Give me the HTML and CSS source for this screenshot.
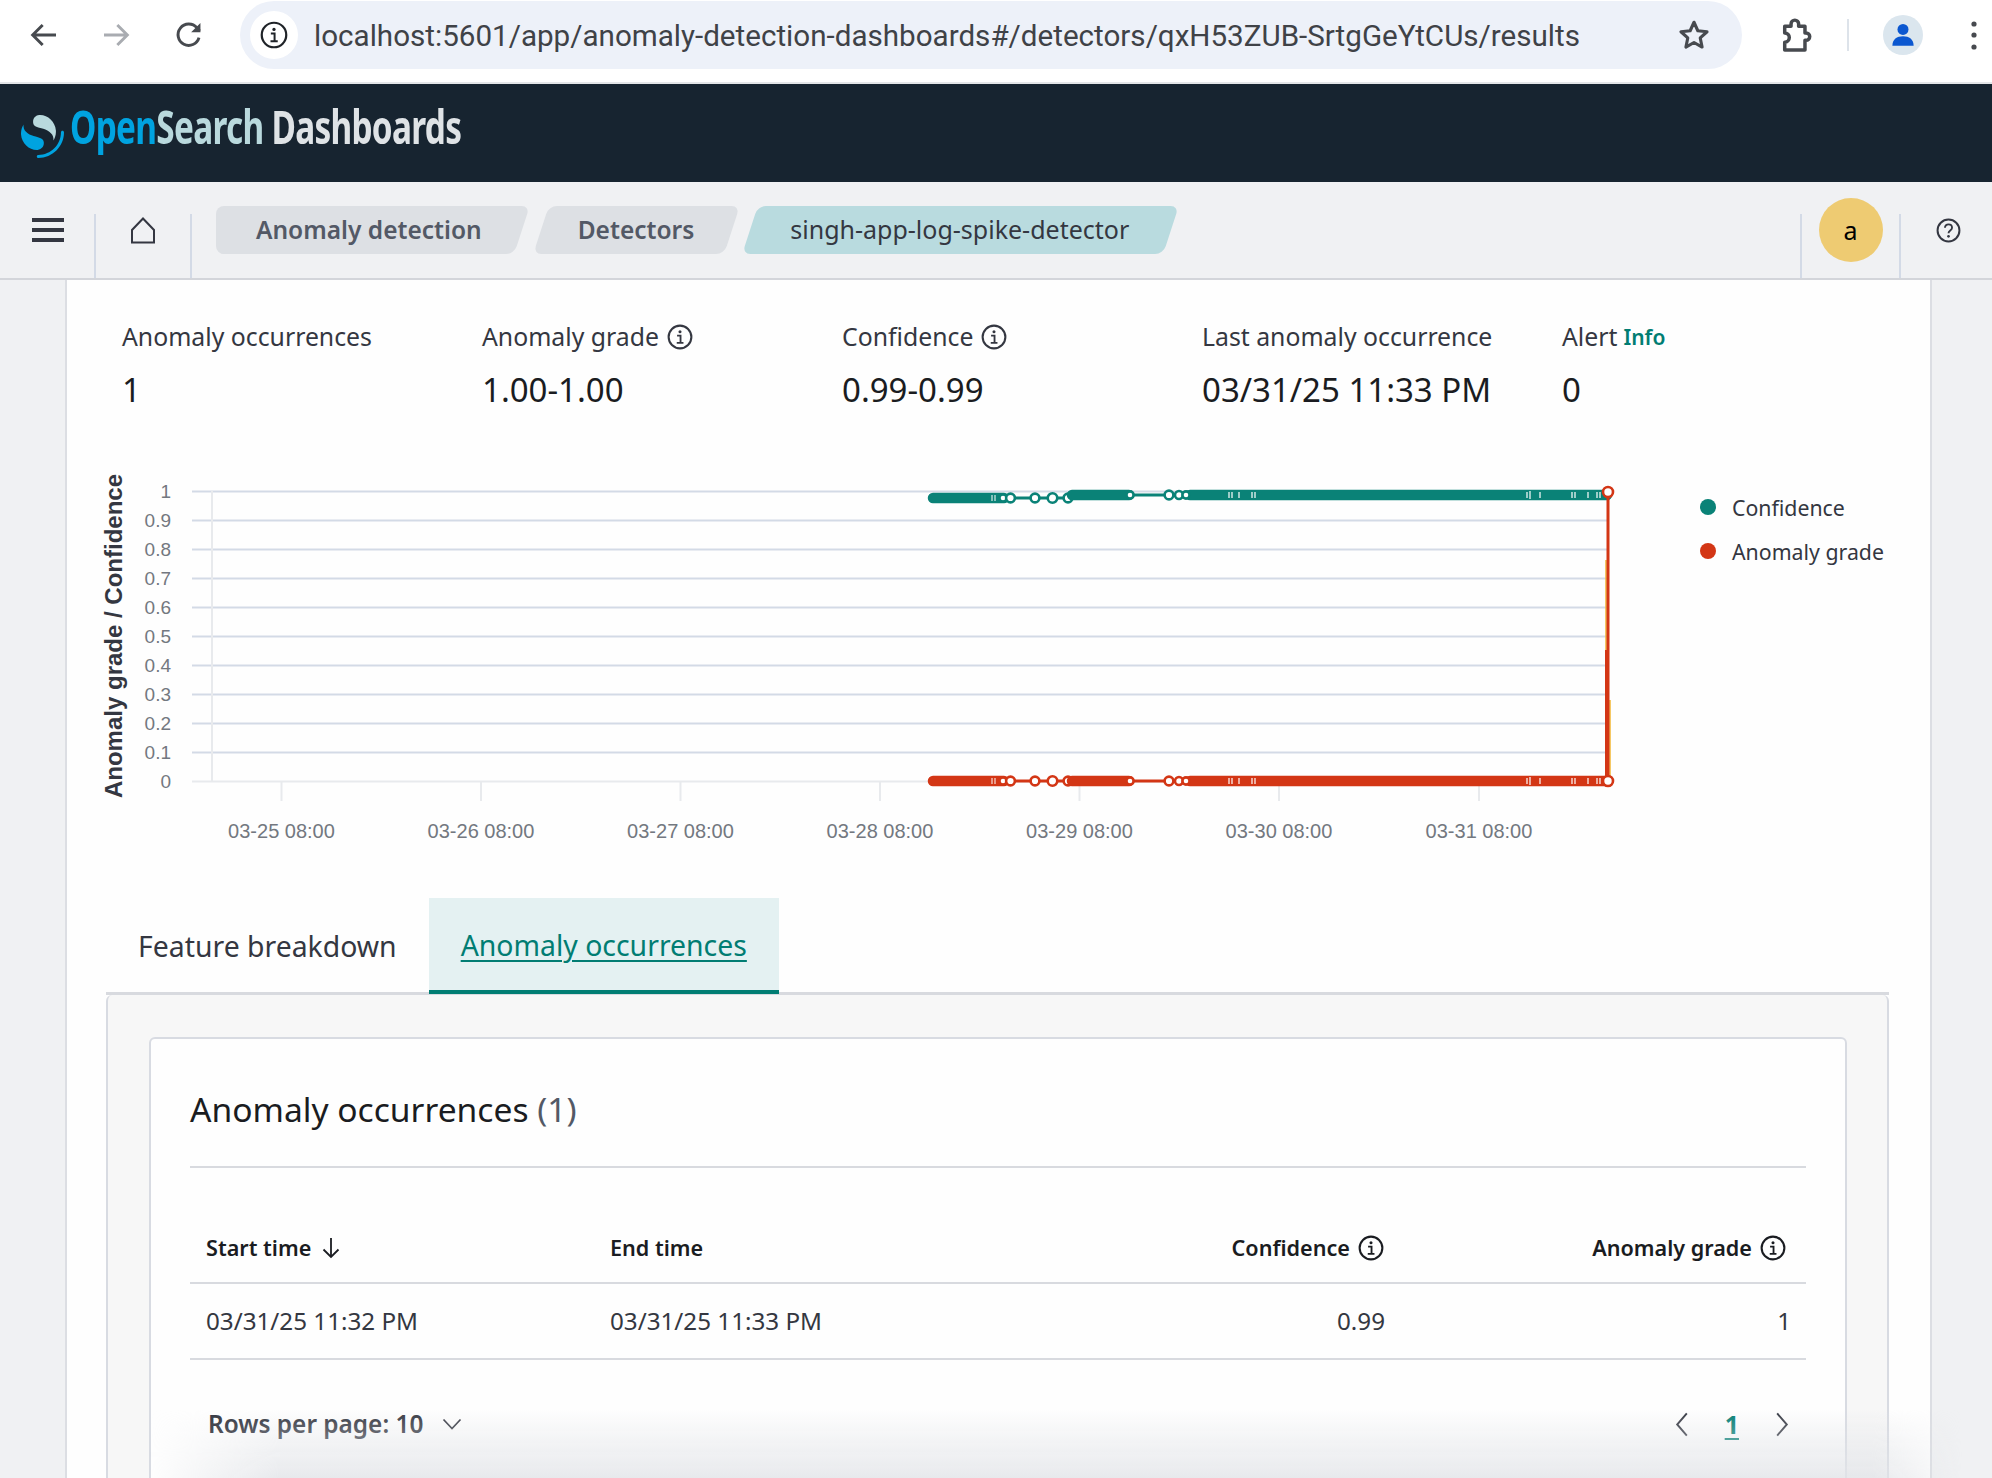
FILE: index.html
```html
<!DOCTYPE html>
<html lang="en">
<head>
    <meta charset="UTF-8">
    <title>Anomaly detection - OpenSearch Dashboards</title>
    <link rel="stylesheet" href="styles.css">
</head>
<body>

    <!-- Shared icons -->
    <svg class="defs" width="0" height="0">
        <symbol id="info" viewBox="0 0 24 24">
            <circle cx="12" cy="12" r="10.5" fill="none" stroke="currentColor" stroke-width="1.9"/>
            <circle cx="12" cy="7.2" r="1.4" fill="currentColor"/>
            <path d="M9.3 10.8h3.2v6.4M9 17.4h6.2" fill="none" stroke="currentColor" stroke-width="1.7"/>
        </symbol>
        <g id="run-left">
            <path d="M933 0H1068" fill="none" stroke="currentColor" stroke-width="3"/>
            <path d="M933 0H1004" fill="none" stroke="currentColor" stroke-width="10.5" stroke-linecap="round"/>
            <g fill="#fff" stroke="currentColor" stroke-width="2.6">
                <circle cx="1003" cy="0" r="3.6"/>
                <circle cx="1010.5" cy="0" r="4.4"/>
                <circle cx="1035" cy="0" r="4.4"/>
                <circle cx="1052.5" cy="0" r="4.8"/>
                <circle cx="1068" cy="0" r="4.4"/>
            </g>
            <path d="M992 -3V3M995 -3V3" stroke="#fff" stroke-width="1"/>
        </g>
        <g id="run-right">
            <path d="M1072 0H1608" fill="none" stroke="currentColor" stroke-width="3"/>
            <path d="M1072 0H1129M1190 0H1607" fill="none" stroke="currentColor" stroke-width="10.5" stroke-linecap="round"/>
            <g fill="#fff" stroke="currentColor" stroke-width="2.6">
                <circle cx="1130" cy="0" r="3.6"/>
                <circle cx="1169" cy="0" r="4.4"/>
                <circle cx="1179" cy="0" r="4"/>
                <circle cx="1186" cy="0" r="3.6"/>
            </g>
            <path d="M1229 -3V3M1232 -3V3M1239 -3V3M1252 -3V3M1255 -3V3M1527 -3V3M1530 -4V4M1540 -3V3M1572 -3V3M1575 -3V3M1588 -3V3M1597 -3V3M1600 -3V3" stroke="#fff" stroke-width="1.2"/>
        </g>
    </svg>

    <!-- Browser toolbar -->
    <div class="browser-bar">
        <svg class="tool-icon back" viewBox="0 0 24 24"><path d="M21 12H4M11 4.5 3.5 12l7.5 7.5" fill="none" stroke="currentColor" stroke-width="2.2"/></svg>
        <svg class="tool-icon forward" viewBox="0 0 24 24"><path d="M3 12h17M13 4.5l7.5 7.5-7.5 7.5" fill="none" stroke="currentColor" stroke-width="2.2"/></svg>
        <svg class="tool-icon reload" viewBox="0 0 24 24"><path d="M19.5 14a8 8 0 1 1-1.6-7.4L20 9" fill="none" stroke="currentColor" stroke-width="2.2"/><path d="M20.6 3v7h-7z" fill="currentColor"/></svg>
        <div class="address-bar">
            <span class="site-info"><svg class="site-icon" viewBox="0 0 24 24"><use href="#info"/></svg></span>
            <span class="url">localhost:5601/app/anomaly-detection-dashboards#/detectors/qxH53ZUB-SrtgGeYtCUs/results</span>
            <svg class="star" viewBox="0 0 24 24"><path d="m12 3 2.7 6 6.5.7-4.8 4.4 1.3 6.4L12 17.3l-5.7 3.2 1.3-6.4-4.8-4.4 6.5-.7z" fill="none" stroke="currentColor" stroke-width="2.2" stroke-linejoin="round"/></svg>
        </div>
        <svg class="puzzle" viewBox="0 0 24 24"><path d="M5.500 6.500h4V5a2.400 2.400 0 0 1 4.800 0v1.500h4v4.200h.7a2.300 2.300 0 0 1 0 4.600h-.7v6.200H5.500v-5a2.900 2.900 0 0 0 0-5.800z" fill="none" stroke="currentColor" stroke-width="2.200" stroke-linejoin="round"/></svg>
        <span class="bar-divider"></span>
        <span class="profile"><svg viewBox="0 0 24 24"><circle cx="12" cy="7.5" r="4.4" fill="currentColor"/><path d="M3.5 20.5c0-5 3.6-7.5 8.5-7.5s8.5 2.5 8.5 7.5z" fill="currentColor"/></svg></span>
        <svg class="kebab" viewBox="0 0 8 32"><circle cx="4" cy="5" r="2.6"/><circle cx="4" cy="16" r="2.6"/><circle cx="4" cy="28" r="2.6"/></svg>
    </div>

    <!-- Header -->
    <div class="app-header">
        <svg class="logo-mark" viewBox="0 0 64 64">
            <path d="M61.7374 23.5C60.4878 23.5 59.4748 24.513 59.4748 25.7626C59.4748 44.3813 44.3813 59.4748 25.7626 59.4748C24.513 59.4748 23.5 60.4878 23.5 61.7374C23.5 62.987 24.513 64 25.7626 64C46.8805 64 64 46.8805 64 25.7626C64 24.513 62.987 23.5 61.7374 23.5Z" fill="#00A3E0"/>
            <path d="M48.0814 38C50.2572 34.4505 52.3615 29.7178 51.9475 23.0921C51.0899 9.36725 38.6589 -1.04463 26.9206 0.0837327C22.3253 0.525465 17.6068 4.2712 18.026 10.9805C18.2082 13.8961 19.6352 15.6169 21.9544 16.9399C24.1618 18.1992 26.9978 18.9969 30.2128 19.9011C34.0962 20.9934 38.6009 22.2203 42.063 24.7717C46.2125 27.8295 49.0491 31.3743 48.0814 38Z" fill="#B9D9DD"/>
            <path d="M3.91861 14C1.74276 17.5495 -0.361506 22.2822 0.0524931 28.9079C0.910072 42.6327 13.3411 53.0446 25.0794 51.9163C29.6747 51.4745 34.3932 47.7288 33.974 41.0195C33.7918 38.1039 32.3647 36.3831 30.0456 35.0601C27.8382 33.8008 25.0022 33.0031 21.7872 32.0989C17.9038 31.0066 13.3991 29.7797 9.93694 27.2283C5.78746 24.1704 2.95092 20.6257 3.91861 14Z" fill="#00A3E0"/>
        </svg>
        <span class="wordmark"><span class="wm-open">Open</span><span class="wm-search">Search</span> Dashboards</span>
    </div>

    <!-- Breadcrumb row -->
    <div class="nav-bar">
        <div class="nav-cell menu-cell">
            <svg class="hamburger" viewBox="0 0 32 24"><path d="M0 2h32M0 12h32M0 22h32" stroke="currentColor" stroke-width="4"/></svg>
        </div>
        <div class="nav-cell home-cell">
            <svg class="home" viewBox="0 0 26 27"><path d="M2 25.500V13L13 1.500l11 11.500v12.500z" fill="none" stroke="currentColor" stroke-width="2"/></svg>
        </div>
        <div class="crumbs">
            <span class="crumb crumb-first">Anomaly detection</span>
            <span class="crumb crumb-second">Detectors</span>
            <span class="crumb crumb-current">singh-app-log-spike-detector</span>
        </div>
        <div class="nav-cell avatar-cell"><span class="avatar">a</span></div>
        <div class="nav-cell help-cell">
            <svg class="help" viewBox="0 0 24 24"><circle cx="12" cy="12" r="10.5" fill="none" stroke="currentColor" stroke-width="1.9"/><path d="M8.6 9.4c0-2 1.5-3.3 3.4-3.3s3.4 1.3 3.4 3.2c0 2.8-3.4 2.7-3.4 5.4" fill="none" stroke="currentColor" stroke-width="1.8"/><circle cx="12" cy="17.6" r="1.3" fill="currentColor"/></svg>
        </div>
    </div>

    <!-- Main panel -->
    <div class="page">
        <div class="panel">

            <div class="stats">
                <div class="stat">
                    <div class="stat-label">Anomaly occurrences</div>
                    <div class="stat-value">1</div>
                </div>
                <div class="stat">
                    <div class="stat-label">Anomaly grade <svg class="info-icon"><use href="#info"/></svg></div>
                    <div class="stat-value">1.00-1.00</div>
                </div>
                <div class="stat">
                    <div class="stat-label">Confidence <svg class="info-icon"><use href="#info"/></svg></div>
                    <div class="stat-value">0.99-0.99</div>
                </div>
                <div class="stat">
                    <div class="stat-label">Last anomaly occurrence</div>
                    <div class="stat-value">03/31/25 11:33 PM</div>
                </div>
                <div class="stat">
                    <div class="stat-label">Alert <span class="info-link">Info</span></div>
                    <div class="stat-value">0</div>
                </div>
            </div>

            <!-- Chart, viewBox uses page coordinates -->
            <div class="chart-row">
                <svg class="chart" viewBox="92 460 1560 400">
                    <g class="grid">
                        <path d="M192 491.5H1607M192 520.5H1607M192 549.5H1607M192 578.5H1607M192 607.5H1607M192 636.5H1607M192 665.5H1607M192 694.5H1607M192 723.5H1607M192 752.5H1607"/>
                    </g>
                    <g class="axis">
                        <path d="M212 491V782M192 781.5H1607M281.500 782V801M481 782V801M680.500 782V801M880 782V801M1079.500 782V801M1279 782V801M1479 782V801"/>
                    </g>
                    <g class="tick-y">
                        <text x="171" y="497.500">1</text>
                        <text x="171" y="526.500">0.9</text>
                        <text x="171" y="555.500">0.8</text>
                        <text x="171" y="584.500">0.7</text>
                        <text x="171" y="613.500">0.6</text>
                        <text x="171" y="642.500">0.5</text>
                        <text x="171" y="671.500">0.4</text>
                        <text x="171" y="700.500">0.3</text>
                        <text x="171" y="729.500">0.2</text>
                        <text x="171" y="758.500">0.1</text>
                        <text x="171" y="787.500">0</text>
                    </g>
                    <g class="tick-x">
                        <text x="281.500" y="838">03-25 08:00</text>
                        <text x="481" y="838">03-26 08:00</text>
                        <text x="680.500" y="838">03-27 08:00</text>
                        <text x="880" y="838">03-28 08:00</text>
                        <text x="1079.500" y="838">03-29 08:00</text>
                        <text x="1279" y="838">03-30 08:00</text>
                        <text x="1479" y="838">03-31 08:00</text>
                    </g>
                    <text class="axis-title" transform="translate(122 636) rotate(-90)">Anomaly grade / Confidence</text>

                    <g class="series-conf">
                        <use href="#run-left" y="498"/>
                        <use href="#run-right" y="495"/>
                    </g>
                    <g class="series-grade">
                        <use href="#run-left" y="781"/>
                        <use href="#run-right" y="781"/>
                        <path d="M1606 560V781M1610 700V781" class="spike-glow"/>
                        <path d="M1608 492V781" class="spike"/>
                        <path d="M1607 650V781" class="spike-thick"/>
                        <circle cx="1608" cy="492" r="5" class="spike-dot"/>
                        <circle cx="1608" cy="781" r="5" class="spike-dot"/>
                    </g>
                </svg>
                <div class="legend">
                    <div class="legend-item"><span class="legend-dot dot-conf"></span>Confidence</div>
                    <div class="legend-item"><span class="legend-dot dot-grade"></span>Anomaly grade</div>
                </div>
            </div>

            <!-- Tabs -->
            <div class="tabs">
                <div class="tab">Feature breakdown</div>
                <div class="tab tab-active"><span>Anomaly occurrences</span></div>
            </div>

            <div class="tab-body">
                <div class="card">
                    <h2 class="card-title">Anomaly occurrences <span class="count">(1)</span></h2>
                    <div class="card-rule"></div>

                    <table class="results">
                        <thead>
                            <tr>
                                <th class="col-start"><span class="th-inner">Start time <svg class="sort" viewBox="0 0 20 24"><path d="M10 2v19M2.500 13.500 10 21l7.500-7.500" fill="none" stroke="currentColor" stroke-width="1.800"/></svg></span></th>
                                <th class="col-end"><span class="th-inner">End time</span></th>
                                <th class="num"><span class="th-inner">Confidence <svg class="info-icon"><use href="#info"/></svg></span></th>
                                <th class="num col-grade"><span class="th-inner">Anomaly grade <svg class="info-icon"><use href="#info"/></svg></span></th>
                            </tr>
                        </thead>
                        <tbody>
                            <tr>
                                <td>03/31/25 11:32 PM</td>
                                <td>03/31/25 11:33 PM</td>
                                <td class="num">0.99</td>
                                <td class="num">1</td>
                            </tr>
                        </tbody>
                    </table>

                    <div class="table-footer">
                        <div class="rows-per-page">Rows per page: 10 <svg class="chev-down" viewBox="0 0 20 12"><path d="m1.500 1.500 8.500 9 8.500-9" fill="none" stroke="currentColor" stroke-width="1.700"/></svg></div>
                        <div class="pager">
                            <svg class="chev" viewBox="0 0 14 26"><path d="M12 1.500 2 13l10 11.500" fill="none" stroke="currentColor" stroke-width="2"/></svg>
                            <span class="page-num">1</span>
                            <svg class="chev" viewBox="0 0 14 26"><path d="m2 1.500 10 11.500-10 11.500" fill="none" stroke="currentColor" stroke-width="2"/></svg>
                        </div>
                    </div>
                </div>
            </div>
        </div>
    </div>

    <!-- Fade at the bottom edge of the screenshot -->
    <div class="bottom-fade"></div>

</body>
</html>
```

FILE: styles.css
```css
* {
    box-sizing: border-box;
}
body {
    margin: 0;
    height: 1478px;
    overflow: hidden;
    position: relative;
    font-family: "Noto Sans", "Open Sans", sans-serif;
    color: #343741;
    background-color: #f0f1f3;
}
.defs {
    position: absolute;
}

/* Browser toolbar */
.browser-bar {
    height: 84px;
    background-color: #fff;
    border-bottom: 2px solid #e3e5e8;
    display: flex;
    align-items: center;
    padding-bottom: 12px;
    color: #474a4f;
}
.tool-icon {
    width: 32px;
    height: 32px;
    flex: none;
}
.back {
    margin-left: 28px;
}
.forward {
    margin-left: 40px;
    color: #a9acb1;
}
.reload {
    margin-left: 41px;
}
.address-bar {
    margin-left: 35px;
    width: 1502px;
    height: 68px;
    border-radius: 34px;
    background-color: #edf1f9;
    display: flex;
    align-items: center;
    padding-left: 10px;
}
.site-info {
    width: 48px;
    height: 48px;
    border-radius: 50%;
    background-color: #fff;
    display: flex;
    align-items: center;
    justify-content: center;
    color: #1f2328;
}
.site-icon {
    width: 28px;
    height: 28px;
}
.url {
    margin: 2px 0 0 16px;
    font-family: Roboto, "Liberation Sans", sans-serif;
    font-size: 29.600px;
    color: #3f4247;
    white-space: nowrap;
}
.star {
    width: 34px;
    height: 34px;
    margin-left: auto;
    margin-right: 31px;
}
.puzzle {
    width: 38px;
    height: 38px;
    margin-left: 34px;
    flex: none;
}
.bar-divider {
    width: 2px;
    height: 32px;
    margin-left: 33px;
    background-color: #dde3ea;
}
.profile {
    width: 40px;
    height: 40px;
    margin-left: 34px;
    border-radius: 50%;
    background-color: #dbe6ee;
    color: #0b57d0;
    display: flex;
    align-items: center;
    justify-content: center;
}
.profile svg {
    width: 30px;
    height: 30px;
}
.kebab {
    width: 8px;
    height: 32px;
    margin-left: 47px;
    fill: #474a4f;
}

/* Header */
.app-header {
    height: 98px;
    background-color: #172430;
    display: flex;
    align-items: center;
    padding-left: 21px;
}
.logo-mark {
    width: 43px;
    height: 43px;
    margin-top: 6px;
    flex: none;
}
.wordmark {
    margin: 0 0 14px 6px;
    font-size: 47px;
    font-weight: 700;
    white-space: nowrap;
    color: #dfe3e6;
    letter-spacing: -1px;
    transform: scaleX(0.71);
    transform-origin: left center;
}
.wm-open {
    color: #00a3e0;
}
.wm-search {
    color: #b9d9dd;
}

/* Breadcrumb row */
.nav-bar {
    height: 98px;
    background-color: #f0f1f3;
    border-bottom: 2px solid #d3d5da;
    display: flex;
    align-items: flex-start;
}
.nav-cell {
    height: 96px;
    display: flex;
    align-items: center;
    justify-content: center;
    background: linear-gradient(#d3dae6, #d3dae6) right bottom / 2px 64px no-repeat;
}
.menu-cell {
    width: 96px;
    justify-content: flex-start;
    padding-left: 32px;
}
.hamburger {
    width: 32px;
    height: 24px;
}
.home-cell {
    width: 96px;
    padding-right: 2px;
}
.home {
    width: 26px;
    height: 27px;
}
.crumbs {
    display: flex;
    gap: 3px;
    margin-left: 24px;
    margin-top: 24px;
}
.crumb {
    position: relative;
    height: 48px;
    line-height: 47px;
    font-size: 24.500px;
    font-weight: 600;
    color: #535966;
    white-space: nowrap;
    z-index: 0;
}
.crumb::before {
    content: "";
    position: absolute;
    top: 0;
    bottom: 0;
    left: 8px;
    right: 8px;
    border-radius: 8px;
    background-color: #dde0e4;
    transform: skewX(-18deg);
    z-index: -1;
}
.crumb-first {
    padding: 0 48px 0 40px;
}
.crumb-first::after {
    content: "";
    position: absolute;
    top: 0;
    bottom: 0;
    left: 0;
    width: 50px;
    border-radius: 8px 0 0 8px;
    background-color: #dde0e4;
    z-index: -1;
}
.crumb-second {
    padding: 0 45px 0 45px;
}
.crumb-current {
    padding: 0 50px 0 48px;
    font-size: 25px;
    font-weight: 400;
    color: #343741;
}
.crumb-current::before {
    background-color: #b9dbdf;
}
.avatar-cell {
    width: 101px;
    margin-left: auto;
    background:
        linear-gradient(#d3dae6, #d3dae6) left bottom / 2px 64px no-repeat,
        linear-gradient(#d3dae6, #d3dae6) right bottom / 2px 64px no-repeat;
}
.avatar {
    width: 64px;
    height: 64px;
    border-radius: 50%;
    background-color: #eecb72;
    color: #000;
    font-size: 25px;
    display: flex;
    align-items: center;
    justify-content: center;
}
.help-cell {
    width: 91px;
    background: none;
    padding-left: 3px;
}
.help {
    width: 25px;
    height: 25px;
}

/* Main panel */
.page {
    padding: 0 60px 0 65px;
}
.panel {
    height: 1200px;
    background-color: #fefefe;
    border-left: 2px solid #dcdee3;
    border-right: 2px solid #dcdee3;
    padding: 39px 41px 0 55px;
}
.stats {
    display: grid;
    grid-template-columns: repeat(4, 360px) 1fr;
}
.stat-label {
    height: 34px;
    font-size: 24.800px;
    line-height: 34px;
    white-space: nowrap;
    display: flex;
    align-items: center;
    gap: 8px;
}
.stat-label .info-icon {
    margin-top: 2px;
}
.info-link {
    margin: 2px 0 0 -2px;
    color: #017d73;
    font-size: 21px;
    line-height: 30px;
    font-weight: 600;
}
.stat-value {
    margin-top: 17px;
    font-size: 33px;
    line-height: 40px;
    color: #1a1c21;
    white-space: nowrap;
}
.info-icon {
    width: 26px;
    height: 26px;
    flex: none;
}

/* Chart */
.chart-row {
    display: flex;
    margin: 50px 0 0 -30px;
}
.chart {
    width: 1560px;
    height: 400px;
    flex: none;
}
.grid path {
    fill: none;
    stroke: #d3dae6;
    stroke-width: 2;
}
.axis path {
    fill: none;
    stroke: #e8eaed;
    stroke-width: 2;
}
.tick-y text,
.tick-x text,
.axis-title {
    font-family: "Liberation Sans", Arial, sans-serif;
}
.tick-y text {
    font-size: 19px;
    fill: #737880;
    text-anchor: end;
}
.tick-x text {
    font-size: 20px;
    fill: #737880;
    text-anchor: middle;
}
.axis-title {
    font-size: 24px;
    font-weight: 700;
    fill: #343741;
    text-anchor: middle;
}
.series-conf {
    color: #0a8277;
}
.series-grade {
    color: #d33615;
}
.spike {
    stroke: #d33615;
    stroke-width: 3;
}
.spike-thick {
    stroke: #d33615;
    stroke-width: 4;
}
.spike-glow {
    stroke: #f2b632;
    stroke-width: 1.500;
}
.spike-dot {
    fill: #fff;
    stroke: #d33615;
    stroke-width: 2.600;
}
.legend {
    margin: 30px 0 0 48px;
    display: flex;
    flex-direction: column;
    gap: 10px;
}
.legend-item {
    display: flex;
    align-items: center;
    gap: 16px;
    height: 34px;
    font-size: 21.300px;
    white-space: nowrap;
}
.legend-dot {
    width: 16px;
    height: 16px;
    border-radius: 50%;
}
.dot-conf {
    background-color: #0a8277;
}
.dot-grade {
    background-color: #d33615;
}

/* Tabs */
.tabs {
    display: flex;
    margin: 38px 0 0 -16px;
    height: 97px;
    border-bottom: 3px solid #d8dadf;
}
.tab {
    height: 96px;
    font-size: 28.400px;
    line-height: 96px;
    padding: 0 32px;
    white-space: nowrap;
    flex: none;
}
.tab-active {
    background-color: #e4f1f2;
    border-bottom: 4px solid #017d73;
    color: #017d73;
    line-height: 95px;
}
.tab-active span {
    text-decoration: underline;
    text-decoration-thickness: 2px;
    text-underline-offset: 4px;
}
.tab-body {
    margin-left: -16px;
    height: 500px;
    padding: 42px 40px 0 41px;
    background-color: #f7f7f7;
    border-left: 2px solid #d8dbe2;
    border-right: 2px solid #d8dbe2;
    border-radius: 6px 6px 0 0;
}
.card {
    height: 460px;
    background-color: #fefefe;
    border: 2px solid #d8dbe2;
    border-radius: 6px 6px 0 0;
    padding: 47px 39px 0;
}
.card-title {
    margin: 0;
    font-size: 33.600px;
    line-height: 46px;
    font-weight: 400;
    color: #1a1c21;
}
.count {
    color: #535966;
}
.card-rule {
    margin-top: 34px;
    height: 2px;
    background-color: #d8dadf;
}

/* Table */
.results {
    width: 100%;
    border-collapse: collapse;
    table-layout: fixed;
}
.results th {
    padding: 63px 16px 17px;
    font-size: 21.600px;
    line-height: 34px;
    font-weight: 600;
    text-align: left;
    color: #1a1c21;
    border-bottom: 2px solid #d8dadf;
}
.results th.col-grade {
    padding-right: 20px;
}
.results td {
    height: 76px;
    padding: 0 16px 2px;
    font-size: 24.200px;
    border-bottom: 2px solid #d8dadf;
    white-space: nowrap;
}
.col-start {
    width: 404px;
}
.col-end {
    width: 405px;
}
.col-grade {
    width: 406px;
}
.results .num {
    text-align: right;
}
.results td.num {
    padding-right: 15px;
}
.th-inner {
    display: inline-flex;
    align-items: center;
    gap: 8px;
    white-space: nowrap;
}
.sort {
    width: 20px;
    height: 24px;
    margin-left: 2px;
}

/* Footer of the table */
.table-footer {
    display: flex;
    justify-content: space-between;
    align-items: center;
    margin-top: 47px;
    padding: 0 17px 0 18px;
}
.rows-per-page {
    display: flex;
    align-items: center;
    gap: 19px;
    font-size: 24.400px;
    font-weight: 600;
    line-height: 34px;
}
.chev-down {
    width: 20px;
    height: 12px;
}
.pager {
    display: flex;
    align-items: center;
    gap: 36px;
}
.chev {
    width: 14px;
    height: 25px;
}
.page-num {
    font-size: 25px;
    font-weight: 700;
    color: #017d73;
    text-decoration: underline;
    text-underline-offset: 4px;
}

/* Blurry fade along the bottom of the screenshot */
.bottom-fade {
    position: absolute;
    left: 150px;
    right: 30px;
    bottom: 0;
    height: 70px;
    background: linear-gradient(rgba(226, 228, 232, 0), rgba(226, 228, 232, 0.8));
    -webkit-mask-image: linear-gradient(90deg, transparent, #000 130px, #000 calc(100% - 90px), transparent);
    mask-image: linear-gradient(90deg, transparent, #000 130px, #000 calc(100% - 90px), transparent);
    pointer-events: none;
}
```
